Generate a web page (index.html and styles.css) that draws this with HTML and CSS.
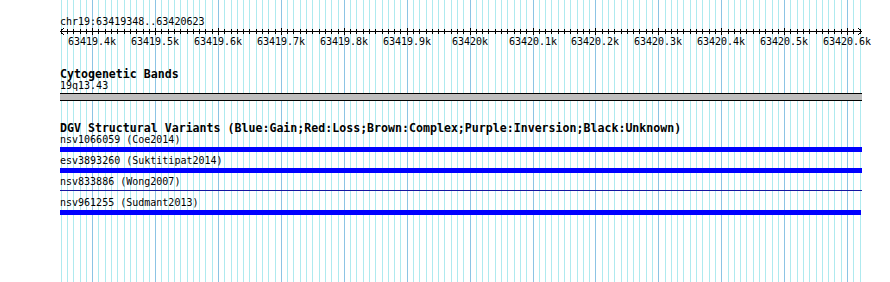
FILE: index.html
```html
<!DOCTYPE html>
<html lang="en">
<head>
    <meta charset="UTF-8">
    <meta name="viewport" content="width=device-width, initial-scale=1.0">
    <title>chr19:63419348..63420623</title>
    <link rel="stylesheet" href="styles.css">
</head>

<body>
    <div class="panel">
        <!-- grid lines sit under every track -->
        <svg class="grid" id="grid" width="890" height="282"></svg>

        <div class="ruler">
            <div class="seg-name">chr19:63419348..63420623</div>
            <svg class="axis" id="axis" width="890" height="7"></svg>
            <div class="tick-labels" id="tick-labels"></div>
        </div>

        <div class="track track-bands">
            <div class="track-title">Cytogenetic Bands</div>
            <div class="feature-label">19q13.43</div>
            <div class="band"></div>
        </div>

        <div class="track track-dgv">
            <div class="track-title">DGV Structural Variants (Blue:Gain;Red:Loss;Brown:Complex;Purple:Inversion;Black:Unknown)</div>
            <div class="variant">
                <div class="feature-label">nsv1066059 (Coe2014)</div>
                <div class="bar gain"></div>
            </div>
            <div class="variant">
                <div class="feature-label">esv3893260 (Suktitipat2014)</div>
                <div class="bar gain"></div>
            </div>
            <div class="variant">
                <div class="feature-label">nsv833886 (Wong2007)</div>
                <div class="bar thin"></div>
            </div>
            <div class="variant">
                <div class="feature-label">nsv961255 (Sudmant2013)</div>
                <div class="bar gain short"></div>
            </div>
        </div>
    </div>

    <script>
        const start = 63419348;
        const end = 63420623;
        const left = 60;
        const width = 802;
        const scale = width / (end - start);
        const NS = 'http://www.w3.org/2000/svg';

        function px(bp) {
            return Math.floor(left + (bp - start) * scale);
        }

        const grid = document.getElementById('grid');
        const axis = document.getElementById('axis');
        const labels = document.getElementById('tick-labels');

        function rect(parent, x, y, w, h, cls) {
            const r = document.createElementNS(NS, 'rect');
            r.setAttribute('x', x);
            r.setAttribute('y', y);
            r.setAttribute('width', w);
            r.setAttribute('height', h);
            r.setAttribute('class', cls);
            parent.appendChild(r);
        }

        // axis line + arrow heads
        rect(axis, left, 3, width, 1, 'ink');
        for (let i = 1; i <= 3; i++) {
            rect(axis, left + i, 3 - i, 1, 1, 'ink');
            rect(axis, left + i, 3 + i, 1, 1, 'ink');
            rect(axis, left + width - 1 - i, 3 - i, 1, 1, 'ink');
            rect(axis, left + width - 1 - i, 3 + i, 1, 1, 'ink');
        }

        for (let bp = Math.ceil(start / 10) * 10; bp <= end; bp += 10) {
            const x = px(bp);
            const major = bp % 100 === 0;
            rect(grid, x, 0, 1, 282, major ? 'major' : 'minor');
            if (major) {
                rect(axis, x, 0, 1, 7, 'ink');
                const span = document.createElement('span');
                span.textContent = (bp / 1000) + 'k';
                span.style.left = x + 'px';
                labels.appendChild(span);
            } else {
                rect(axis, x, 1, 1, 5, 'ink');
            }
        }
    </script>
</body>

</html>
```

FILE: styles.css
```css
html, body {
    margin: 0;
    padding: 0;
    background: #fff;
}

body {
    width: 890px;
    height: 282px;
    overflow: hidden;
    font-family: "DejaVu Sans Mono", "Liberation Mono", monospace;
    font-size: 10px;
    color: #000;
}

.panel {
    position: relative;
    width: 890px;
    height: 282px;
}

.grid {
    position: absolute;
    top: 0;
    left: 0;
    z-index: 0;
    shape-rendering: crispEdges;
}

.grid .minor {
    fill: #aeeaef;
}

.grid .major {
    fill: #8cc4e4;
}

.ruler,
.track {
    position: relative;
    z-index: 1;
}

.ruler {
    padding-top: 15px;
}

.seg-name {
    margin-left: 60px;
    line-height: 13px;
    height: 13px;
}

.axis {
    display: block;
    shape-rendering: crispEdges;
}

.axis .ink {
    fill: #000;
}

.tick-labels {
    position: relative;
    height: 13px;
    line-height: 13px;
}

.tick-labels span {
    position: absolute;
    top: 0;
    transform: translateX(-50%);
    white-space: nowrap;
}

.track {
    margin-left: 60px;
    width: 802px;
}

.track-bands {
    margin-top: 20px;
}

.track-dgv {
    margin-top: 21px;
}

.track-title {
    font-weight: bold;
    font-size: 11.6px;
    line-height: 12px;
    height: 12px;
    white-space: nowrap;
}

.feature-label {
    line-height: 12px;
    height: 12px;
    white-space: nowrap;
}

.band {
    margin-top: 1px;
    height: 6px;
    border-top: 1px solid #000;
    border-bottom: 1px solid #000;
    background: #bebebe;
}

.variant {
    height: 21px;
}

.variant:first-of-type {
    margin-top: 1px;
}

.bar {
    margin-top: 1px;
    height: 5px;
}

.bar.gain {
    background: #0000ff;
}

.bar.short {
    width: 801px;
}

.bar.thin {
    margin-top: 2px;
    height: 1px;
    background: #1414a0;
}
```
